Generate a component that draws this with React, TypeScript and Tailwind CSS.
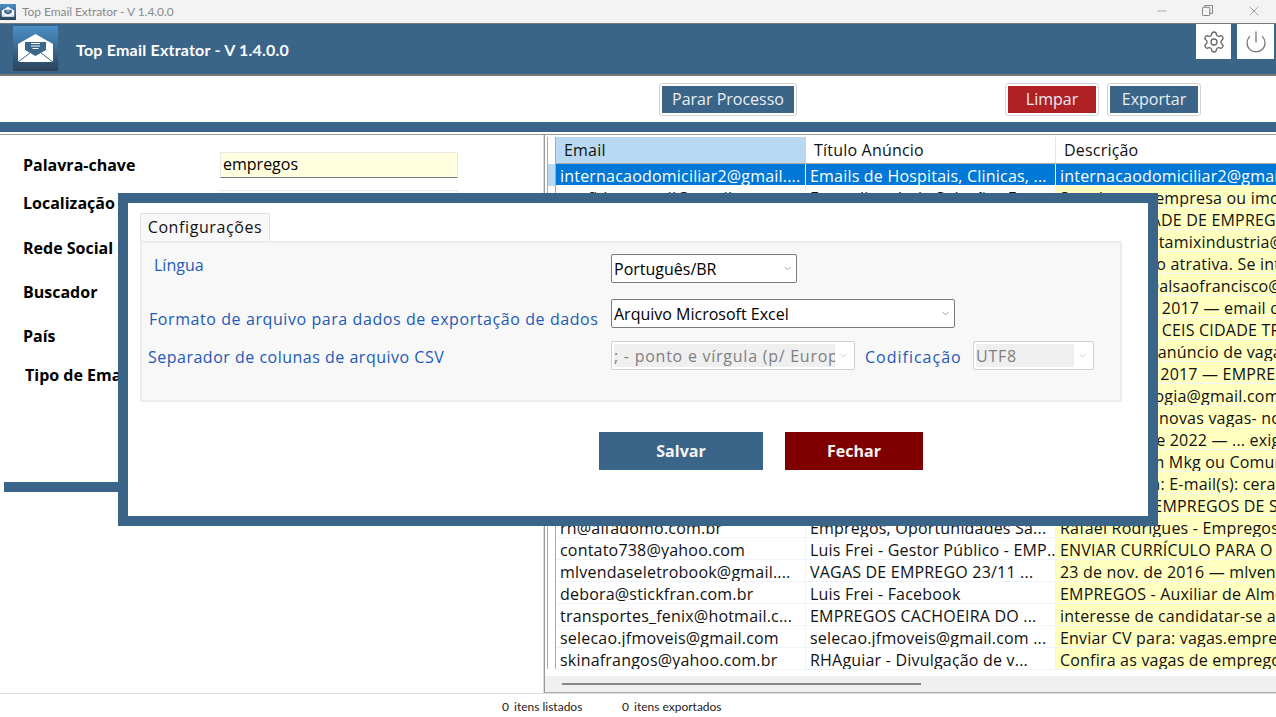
import React from 'react';
import { ChevronDown, Settings, Power, Minus, X } from 'lucide-react';

const rows = [
  ['internacaodomiciliar2@gmail....', 'Emails de Hospitais, Clinicas, ...', 'internacaodomiciliar2@gmail.com'],
  ['confidencemail@gmail.com', 'Emprelimp Ltda Soluções E...', 'Sou de uma empresa ou imobiliária'],
  ['rh@cidadeempregos.com.br', 'Cidade de Empregos - Vagas...', 'CEIS DA CIDADE DE EMPREGOS'],
  ['rh@tamixindustria.com.br', 'Tamix Indústria - Vagas...', 'rh@vaga.contamixindustria@gmail.com'],
  ['vagas@imobiliaria.com', 'Vagas para imobiliária ...', 'Remuneração atrativa. Se interessar'],
  ['rh@alsaofrancisco.com', 'Empregos São Francisco ...', 'curriculos2@alsaofrancisco@gmail.com'],
  ['contato@empregos.com', 'Empregos 2017 ...', '12 de set. de 2017 — email de contato'],
  ['rh@ceiscidade.com.br', 'CEIS Cidade Trabalho ...', 'Vagas para a CEIS CIDADE TRABALHO'],
  ['anuncio@vagas.com.br', 'Anúncio de vagas ...', 'Publicar seu anúncio de vagas de emprego'],
  ['vagas2017@gmail.com', 'Empregos 2017 ...', '13 de abr de 2017 — EMPREGOS'],
  ['tecnologia@gmail.com', 'Tecnologia - Vagas ...', 'vagas.tecnologia@gmail.com'],
  ['novasvagas@gmail.com', 'Novas vagas ...', 'Confira já as novas vagas- no site'],
  ['exige@gmail.com', 'Vagas 2022 ...', '15 de mar. de 2022 — ... exigências'],
  ['mkt@gmail.com', 'Mkg ou Comunicação ...', 'Formação em Mkg ou Comunicação'],
  ['ceara@gmail.com', 'Empregos Ceará ...', 'Contato vaga: E-mail(s): cerara@gmail'],
  ['rh@empregosde.com.br', 'Empregos de ...', 'VAGAS DOS EMPREGOS DE SÃO PAULO'],
  ['rh@alfadomo.com.br', 'Empregos, Oportunidades Sa...', 'Rafael Rodrigues - Empregos'],
  ['contato738@yahoo.com', 'Luis Frei - Gestor Público - EMP...', 'ENVIAR CURRÍCULO PARA O E-MAIL'],
  ['mlvendaseletrobook@gmail....', 'VAGAS DE EMPREGO 23/11 ...', '23 de nov. de 2016 — mlvendas'],
  ['debora@stickfran.com.br', 'Luis Frei - Facebook', 'EMPREGOS - Auxiliar de Almoxarife'],
  ['transportes_fenix@hotmail.c...', 'EMPREGOS CACHOEIRA DO ...', 'interesse de candidatar-se a vaga'],
  ['selecao.jfmoveis@gmail.com', 'selecao.jfmoveis@gmail.com ...', 'Enviar CV para: vagas.empregos'],
  ['skinafrangos@yahoo.com.br', 'RHAguiar - Divulgação de v...', 'Confira as vagas de emprego'],
];

const fields = [
  { label: 'Palavra-chave', row: 'mt-[16px] pl-[23px]', input: 'yellow' },
  { label: 'Localização', row: 'mt-[10px] pl-[23px]', input: 'white' },
  { label: 'Rede Social', row: 'mt-[17px] pl-[23px]', input: '' },
  { label: 'Buscador', row: 'mt-[16px] pl-[23px]', input: '' },
  { label: 'País', row: 'mt-[16px] pl-[23px]', input: '' },
  { label: 'Tipo de Email', row: 'mt-[11px] pl-[25px]', input: '' },
];

function EnvelopeLogo({ className }: { className: string }) {
  return (
    <svg viewBox="0 0 45 45" className={className}>
      <defs>
        <linearGradient id="logoBg" x1="0" y1="0" x2="0" y2="1">
          <stop offset="0" stopColor="#4a90c8" />
          <stop offset="1" stopColor="#2b4258" />
        </linearGradient>
      </defs>
      <rect width="45" height="45" rx="1" fill="url(#logoBg)" />
      <path d="M5 18 L22.5 8 L40 18 L40 36 L5 36 Z" fill="#fff" />
      <path d="M12 16 H33 V24 L22.5 30 L12 24 Z" fill="#3b678a" />
      <path d="M18 17.500 H27 M18 20 H27 M19.500 22.500 H25.500" stroke="#fff" strokeWidth="1" />
      <path d="M5 36 L17 27 M40 36 L28 27" stroke="#3b678a" strokeWidth="1" />
    </svg>
  );
}

function Field({ text, className, disabled }: { text: string; className: string; disabled?: boolean }) {
  return (
    <div className={`flex h-[29px] items-center rounded-[2px] border bg-white ${disabled ? 'border-[#d0d0d0] p-[2px] tracking-[0.75px]' : 'border-[#7a7a7a] pl-[2px] tracking-normal'} ${className}`}>
      <span className={`flex h-full min-w-0 flex-1 items-center overflow-hidden whitespace-nowrap ${disabled ? 'bg-[#efefef] pt-[1px] text-[#808080]' : 'text-black'}`}>{text}</span>
      <ChevronDown className={`mx-[3px] size-[11px] shrink-0 ${disabled ? 'text-[#b0b0b0]' : 'text-[#666]'}`} strokeWidth={1.3} />
    </div>
  );
}

export default function App() {
  return (
    <div className="relative flex h-[717px] w-[1276px] flex-col overflow-hidden bg-white font-['Open_Sans','Noto_Sans',sans-serif]">
      {/* window title bar */}
      <div className="flex h-[23px] shrink-0 items-center bg-[#f3f3f3] pr-[14px]">
        <EnvelopeLogo className="size-[16px]" />
        <span className="ml-[6px] font-['Lato',sans-serif] text-[12px] tracking-[-0.06px] text-[#8a8a8a]">Top Email Extrator - V 1.4.0.0</span>
        <div className="-mt-[2px] ml-auto flex items-center gap-[33px] text-[#777]">
          <Minus className="size-[14px]" strokeWidth={1} />
          <svg viewBox="0 0 12 12" className="size-[11px]" fill="none" stroke="#777">
            <rect x="0.500" y="2.500" width="8" height="9" rx="1" />
            <path d="M3 2.500 V0.500 H11.500 V9 H8.500" />
          </svg>
          <X className="size-[16px]" strokeWidth={1} />
        </div>
      </div>

      {/* app header */}
      <div className="flex h-[53px] shrink-0 items-start border-t border-b-2 border-t-[#777] border-b-[#777] bg-[#3b6588] pl-[13px] pr-[2px]">
        <EnvelopeLogo className="mt-[2px] size-[45px]" />
        <span className="ml-[18px] mt-[15px] font-['Lato',sans-serif] text-[16px] font-bold leading-[22px] tracking-[0.22px] text-white">Top Email Extrator - V 1.4.0.0</span>
        <div className="ml-auto flex gap-[6px]">
          <div className="flex h-[35px] w-[35px] items-center justify-center bg-white">
            <Settings className="size-[24px] text-[#666]" strokeWidth={1.3} />
          </div>
          <div className="flex h-[35px] w-[37px] items-center justify-center bg-white">
            <Power className="size-[24px] text-[#777]" strokeWidth={1.3} />
          </div>
        </div>
      </div>

      {/* toolbar */}
      <div className="flex h-[46px] shrink-0 items-center pl-[659px] text-[16px] leading-[23px] text-[#e8eef4]">
        <div className="mt-[1px] rounded-[3px] border border-[#d4d4d4] p-[2px]">
          <div className="flex h-[27px] w-[132px] items-center justify-center bg-[#3b6588] pb-[1px]">Parar Processo</div>
        </div>
        <div className="ml-[208px] mt-[1px] rounded-[3px] border border-[#d4d4d4] p-[2px]">
          <div className="flex h-[27px] w-[88px] items-center justify-center bg-[#b02024] pb-[1px]">Limpar</div>
        </div>
        <div className="ml-[8px] mt-[1px] rounded-[3px] border border-[#d4d4d4] p-[2px]">
          <div className="flex h-[27px] w-[88px] items-center justify-center bg-[#3b6588] pb-[1px]">Exportar</div>
        </div>
      </div>
      <div className="h-[10px] shrink-0 bg-[#3b6588]" />
      <div className="h-[3px] shrink-0 border-b border-[#999] bg-white" />

      {/* main area */}
      <div className="flex min-h-0 flex-1">
        <div className="flex w-[544px] shrink-0 flex-col border-r border-[#ddd]">
          {fields.map((f) => (
            <div key={f.label} className={`flex h-[28px] items-center text-[16px] font-bold text-black ${f.row}`}>
              <span className="w-[197px] shrink-0 leading-[28px]">{f.label}</span>
              {f.input === 'yellow' ? (
                <div className="flex h-[26px] w-[238px] items-center border border-[#e8e8e8] border-b-[#777] bg-[#ffffe0] pb-[2px] pl-[2px] font-normal">empregos</div>
              ) : f.input === 'white' ? (
                <div className="h-[26px] w-[238px] border border-[#e8e8e8] bg-white" />
              ) : null}
            </div>
          ))}
          <div className="ml-[4px] mt-[93px] h-[10px] shrink-0 bg-[#3b6588]" />
        </div>

        {/* results grid */}
        <div className="flex min-w-0 flex-1 flex-col border-l border-[#999] pt-[2px]">
          <div className="flex min-h-0 flex-1 pl-[2px]">
            <div className="flex h-[532px] w-[9px] shrink-0 flex-col border-x border-[#aaa] bg-white">
              <div className="h-[27px] shrink-0" />
              <div className="h-[22px] shrink-0 bg-[#b9d9f2]" />
            </div>
            <div className="min-w-0 flex-1 overflow-hidden text-[16px] tracking-[0.2px]">
              <div className="flex h-[27px] border-b border-[#aaa] leading-[26px] text-[#111]">
                <div className="w-[250px] shrink-0 bg-[#b9d9f2] pl-[8px]">Email</div>
                <div className="w-[250px] shrink-0 border-r border-[#e4e4e4] pl-[8px]">Título Anúncio</div>
                <div className="flex-1 pl-[8px]">Descrição</div>
              </div>
              {rows.map((r, i) => (
                <div key={r[0]} className={`flex h-[22px] leading-[25px] ${i === 0 ? 'bg-[#0078d7] text-white' : 'text-[#111]'}`}>
                  <div className={`w-[250px] shrink-0 overflow-hidden whitespace-nowrap border-r border-b pl-[4px] ${i === 0 ? 'border-white' : 'border-[#eef5fc]'}`}>{r[0]}</div>
                  <div className={`w-[250px] shrink-0 overflow-hidden whitespace-nowrap border-r border-b pl-[4px] ${i === 0 ? 'border-white' : 'border-[#eef5fc]'}`}>{r[1]}</div>
                  <div className={`flex-1 overflow-hidden whitespace-nowrap border-b border-[#eef5fc] pl-[4px] ${i === 0 ? '' : 'bg-[#ffffc0]'}`}>{r[2]}</div>
                </div>
              ))}
            </div>
          </div>
          <div className="flex h-[17px] shrink-0 items-center border-b border-[#aaa] bg-[#f0f0f0] pl-[17px]">
            <div className="h-[2px] w-[359px] bg-[#888]" />
          </div>
        </div>
      </div>

      {/* status bar */}
      <div className="flex h-[24px] shrink-0 items-center border-t border-[#ddd] pl-[502px] pt-[2px] font-['Lato',sans-serif] text-[12px] text-[#222]">
        <span className="w-[12px]">0</span>
        <span className="w-[108px]">itens listados</span>
        <span className="w-[12px]">0</span>
        <span>itens exportados</span>
      </div>

      {/* settings dialog */}
      <div className="absolute left-[118px] top-[193px] flex h-[333px] w-[1040px] flex-col border-10 border-[#3b6588] bg-white px-[12px] pt-[10px]">
        <div className="flex h-[29px] w-[130px] items-center justify-center rounded-t-[2px] border border-b-0 border-[#e0e0e0] bg-[#f8f8f8] pb-[2px] text-[16px] tracking-[0.6px] text-[#111]">Configurações</div>
        <div className="-mt-px flex h-[161px] w-[982px] flex-col border-2 border-[#ececec] bg-[#f8f8f8] text-[16px] text-[#1e58b8]">
          <div className="flex h-[55px] items-start pl-[12px] pt-[11px]">
            <span className="w-[457px] shrink-0 leading-[22px]">Língua</span>
            <Field text="Português/BR" className="w-[186px]" />
          </div>
          <div className="flex h-[41px] items-start pl-[7px] pt-[1px]">
            <span className="mt-[9px] w-[462px] shrink-0 whitespace-nowrap leading-[22px] tracking-[0.58px]">Formato de arquivo para dados de exportação de dados</span>
            <Field text="Arquivo Microsoft Excel" className="w-[344px]" />
          </div>
          <div className="flex items-start pl-[6px] pt-[2px]">
            <span className="mt-[5px] w-[463px] shrink-0 leading-[22px] tracking-[0.5px]">Separador de colunas de arquivo CSV</span>
            <Field text="; - ponto e vírgula (p/ Europa)" className="w-[244px]" disabled />
            <span className="ml-[10px] mt-[5px] w-[108px] shrink-0 leading-[22px] tracking-[1px]">Codificação</span>
            <Field text="UTF8" className="w-[121px]" disabled />
          </div>
        </div>
        <div className="mt-[30px] flex gap-[22px] pl-[459px] text-[16px] font-bold text-[#f4f4f4]">
          <div className="flex h-[38px] w-[164px] items-center justify-center bg-[#3b6588]">Salvar</div>
          <div className="flex h-[38px] w-[138px] items-center justify-center bg-[#800000]">Fechar</div>
        </div>
      </div>
    </div>
  );
}
